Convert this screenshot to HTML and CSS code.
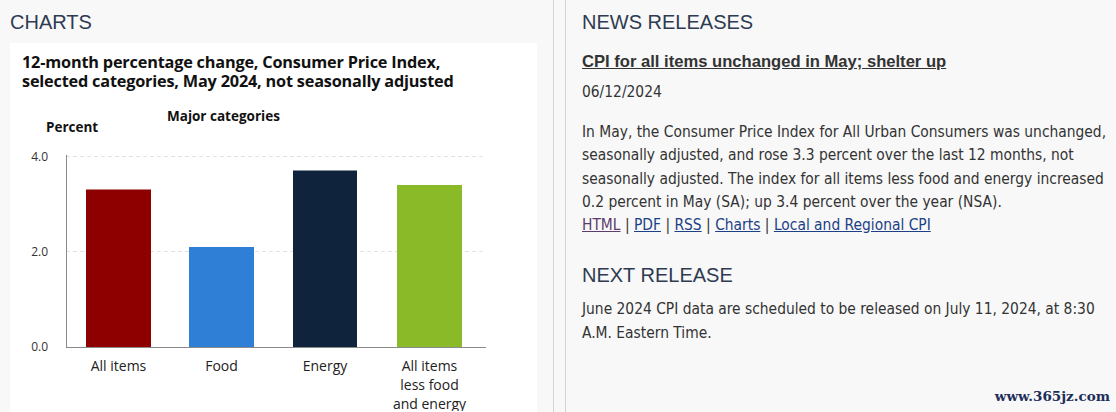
FILE: index.html
```html
<!DOCTYPE html>
<html>
<head>
<meta charset="utf-8">
<link rel="stylesheet" href="styles.css">
</head>
<body>
<div class="page">
  <section class="charts">
    <h2 class="heading">CHARTS</h2>
    <div class="chart-box">
      <h3 class="chart-title"><span class="tline">12-month percentage change, Consumer Price Index,</span><span class="tline">selected categories, May 2024, not seasonally adjusted</span></h3>
      <svg class="chart" width="527" height="312" viewBox="0 0 527 312">
        <text class="sub" x="157" y="22">Major categories</text>
        <text class="sub" x="36" y="33">Percent</text>
        <line class="grid" x1="56" y1="57.5" x2="476" y2="57.5"/>
        <line class="grid" x1="56" y1="152.5" x2="476" y2="152.5"/>
        <text class="tick" x="38" y="61.5">4.0</text>
        <text class="tick" x="38" y="156.5">2.0</text>
        <text class="tick" x="38" y="251.5">0.0</text>
        <rect x="76" y="90.5" width="65" height="157.5" fill="#8e0000"/>
        <rect x="179" y="148" width="65" height="100" fill="#2f7fd6"/>
        <rect x="283" y="71.5" width="64" height="176.5" fill="#0f233d"/>
        <rect x="387" y="86" width="65" height="162" fill="#8aba27"/>
        <line class="axis" x1="56.5" y1="56" x2="56.5" y2="248.5"/>
        <line class="axis" x1="56" y1="248.5" x2="476" y2="248.5"/>
        <text class="cat" x="108.5" y="271.5">All items</text>
        <text class="cat" x="211.5" y="271.5">Food</text>
        <text class="cat" x="315" y="271.5">Energy</text>
        <text class="cat" x="419.5" y="271.5">All items</text>
        <text class="cat" x="419.5" y="291">less food</text>
        <text class="cat" x="419.5" y="310">and energy</text>
      </svg>
    </div>
  </section>
  <section class="news">
    <h2 class="heading">NEWS RELEASES</h2>
    <a class="release-title" href="#">CPI for all items unchanged in May; shelter up</a>
    <p class="date">06/12/2024</p>
    <p class="body-text">In May, the Consumer Price Index for All Urban Consumers was unchanged, seasonally adjusted, and rose 3.3 percent over the last 12 months, not seasonally adjusted. The index for all items less food and energy increased 0.2 percent in May (SA); up 3.4 percent over the year (NSA).<br>
    <a class="visited" href="#">HTML</a> | <a href="#">PDF</a> | <a href="#">RSS</a> | <a href="#">Charts</a> | <a href="#">Local and Regional CPI</a></p>
    <h2 class="heading next">NEXT RELEASE</h2>
    <p class="body-text">June 2024 CPI data are scheduled to be released on July 11, 2024, at 8:30 A.M. Eastern Time.</p>
    <div class="watermark">www.365jz.com</div>
  </section>
</div>
</body>
</html>
```
FILE: styles.css
```css
html, body {
  margin: 0;
  padding: 0;
  background: #f8f8f8;
  overflow: hidden;
}
.page {
  display: flex;
  width: 1116px;
  height: 412px;
  gap: 11px;
}
.charts {
  width: 543px;
  padding-left: 10px;
  border-right: 1px solid #d4d4d4;
  display: flex;
  flex-direction: column;
}
.heading {
  margin: 0;
  font-family: "Liberation Sans", Arial, sans-serif;
  font-weight: normal;
  font-size: 20px;
  line-height: 24px;
  color: #2e3b51;
  padding-top: 10px;
}
.chart-box {
  margin-top: 9px;
  width: 527px;
  flex: 1;
  background: #ffffff;
}
.chart-title {
  margin: 0;
  padding: 10px 0 0 12px;
  font-family: "Open Sans", "Noto Sans", sans-serif;
  font-weight: bold;
  font-size: 16.3px;
  color: #111;
  letter-spacing: -0.2px;
}
.tline {
  display: block;
  line-height: 19px;
  white-space: nowrap;
}
.chart {
  display: block;
  margin-top: 8px;
  font-family: "Open Sans", "Noto Sans", sans-serif;
}
.sub {
  font-weight: bold;
  font-size: 13.5px;
  fill: #111;
}
.tick {
  font-size: 12px;
  fill: #333;
  text-anchor: end;
}
.cat {
  font-size: 14px;
  fill: #222;
  text-anchor: middle;
}
.grid {
  stroke: #e2e2e2;
  stroke-width: 1;
  stroke-dasharray: 4 3;
}
.axis {
  stroke: #8a8a8a;
  stroke-width: 1;
}
.news {
  flex: 1;
  border-left: 1px solid #d4d4d4;
  padding-left: 16px;
  position: relative;
  font-family: "DejaVu Sans Condensed", "DejaVu Sans", sans-serif;
  color: #333;
}
.release-title {
  display: block;
  margin-top: 18px;
  font-family: "Liberation Sans", Arial, sans-serif;
  font-weight: bold;
  font-size: 16.6px;
  color: #333;
  line-height: 20px;
}
.date {
  margin: 10px 0 0;
  font-size: 15.4px;
  line-height: 20px;
}
.body-text {
  margin: 19px 0 0;
  font-size: 15.4px;
  line-height: 23.3px;
  width: 530px;
}
.body-text a {
  color: #1d3f86;
}
.body-text a.visited {
  color: #5c3b6f;
}
.next {
  margin-top: 16px;
}
.news .next + .body-text {
  margin-top: 11px;
}
.watermark {
  position: absolute;
  right: 6px;
  bottom: 8px;
  font-family: "DejaVu Serif", serif;
  font-weight: bold;
  font-size: 13.5px;
  color: #1d2e5a;
}
```
